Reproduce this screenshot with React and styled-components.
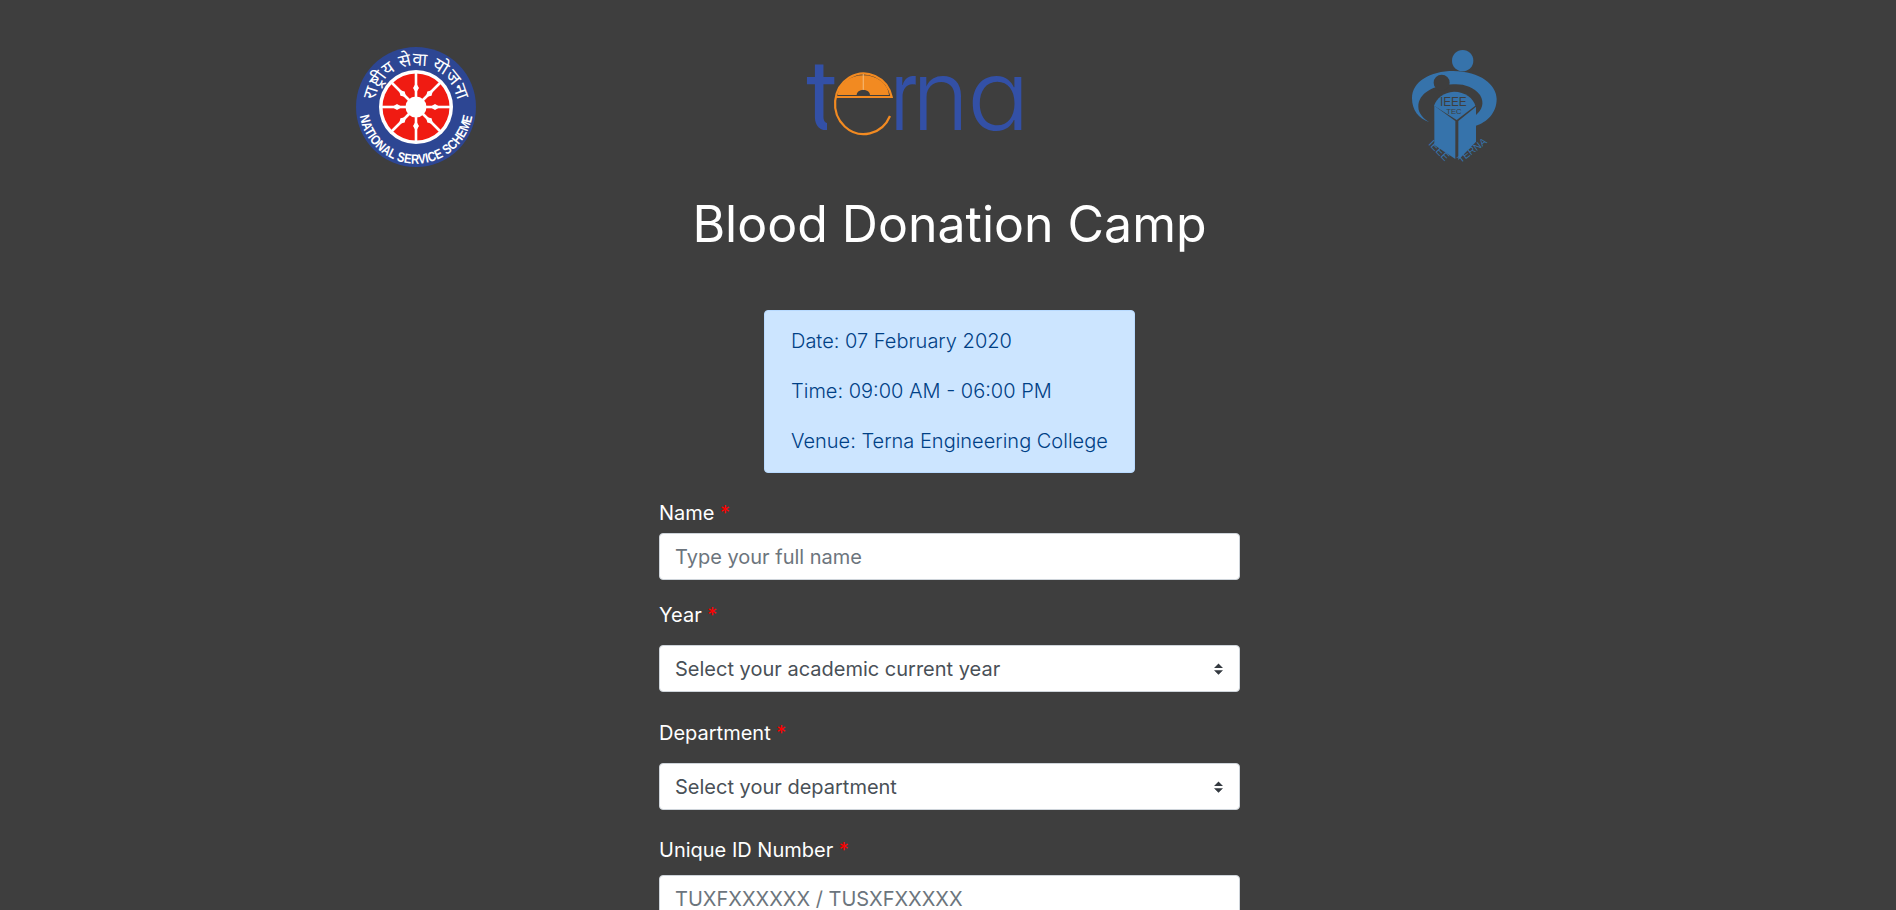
import React from "react"
import styled, { createGlobalStyle } from "styled-components"

const GlobalStyle = createGlobalStyle`
    html, body {
        margin: 0;
        height: 100%;
        overflow: hidden;
    }
    body {
        background: #3e3e3e;
        font-family: Inter, "Noto Sans", sans-serif;
        color: #fff;
    }
`

const Page = styled.div`
    display: flex;
    flex-direction: column;
    align-items: center;
    box-sizing: border-box;
    height: 910px;
    padding-left: 3px;
    overflow: hidden;
`

const LogoRow = styled.div`
    align-self: stretch;
    display: flex;
    align-items: flex-start;
    height: 189px;
    flex: none;
`

const LogoSvg = styled.svg`
    display: block;
    flex: none;
    overflow: visible;
    margin-left: ${props => props.$left}px;
    margin-top: ${props => props.$top}px;
`

const Title = styled.h1`
    margin: 0;
    font-size: 50px;
    line-height: 70px;
    font-weight: 400;
    text-align: center;
`

const Alert = styled.div`
    margin-top: 51px;
    box-sizing: border-box;
    width: 371px;
    height: 163px;
    padding: 15px 26px;
    display: flex;
    flex-direction: column;
    gap: 20px;
    flex: none;
    background: #cce5ff;
    border: 1px solid #b8daff;
    border-radius: 4px;
    color: #004085;
    font-size: 20px;
    font-weight: 300;
    line-height: 30px;
    white-space: nowrap;
`

const Form = styled.form`
    width: 581px;
    margin-top: 25px;
    flex: none;
`

const Group = styled.div`
    margin-top: ${props => props.$top}px;
`

const Label = styled.label`
    display: block;
    font-size: 20px;
    line-height: 30px;
    margin-bottom: ${props => props.$gap}px;
`

const Star = styled.span`
    color: #f00;
`

const Input = styled.input`
    display: block;
    box-sizing: border-box;
    width: 100%;
    height: 47px;
    padding: 0 15px;
    background: #fff;
    border: 1px solid #ced4da;
    border-radius: 4px;
    color: #495057;
    font-family: inherit;
    font-size: 20px;
    &::placeholder {
        color: #6c757d;
        opacity: 1;
    }
`

const Select = styled.select`
    display: block;
    box-sizing: border-box;
    width: 100%;
    height: 47px;
    padding: 0 32px 0 15px;
    appearance: none;
    background: #fff url("data:image/svg+xml,%3csvg xmlns='http://www.w3.org/2000/svg' width='4' height='5' viewBox='0 0 4 5'%3e%3cpath fill='%23343a40' d='M2 0L0 2h4zm0 5L0 3h4z'/%3e%3c/svg%3e") no-repeat right 16px center / 9px 12px;
    border: 1px solid #ced4da;
    border-radius: 4px;
    color: #495057;
    font-family: inherit;
    font-size: 20px;
`

const NssLogo = () => (
    <LogoSvg $left={353} $top={47} width="120" height="120" viewBox="0 0 120 120">
        <defs>
            <path id="nssTop" d="M 20.5 73 A 41.6 41.6 0 1 1 99.5 73" />
            <path id="nssBottom" d="M 3.6 68 A 57 57 0 0 0 116.4 68" />
        </defs>
        <circle cx="60" cy="60" r="60" fill="#2d4693" />
        <circle cx="60" cy="60" r="37" fill="#fff" />
        <circle cx="60" cy="60" r="33.5" fill="#f01b12" />
        {[0, 45, 90, 135, 180, 225, 270, 315].map(a => (
            <g key={a} transform={`rotate(${a} 60 60)`}>
                <rect x="58.7" y="24" width="2.6" height="30" fill="#fff" />
                <path d="M60 36l3 5-3 5-3-5z" fill="#fff" />
            </g>
        ))}
        <circle cx="60" cy="60" r="10.5" fill="#fff" />
        <text fill="#fff" fontSize="18" fontFamily="'Noto Sans Devanagari', 'Noto Sans', sans-serif">
            <textPath href="#nssTop" startOffset="50%" textAnchor="middle">राष्ट्रीय सेवा योजना</textPath>
        </text>
        <text fill="#fff" fontSize="13.5" fontWeight="700" fontFamily="'Liberation Sans', sans-serif">
            <textPath href="#nssBottom" startOffset="50%" textAnchor="middle" textLength="160" lengthAdjust="spacingAndGlyphs">NATIONAL SERVICE SCHEME</textPath>
        </text>
    </LogoSvg>
)

const TernaLogo = () => (
    <LogoSvg $left={330} $top={30} width="222" height="120" viewBox="0 -28 222 120">
        <defs>
            <clipPath id="ternaFoot">
                <rect x="0" y="-10" width="40" height="38" />
                <rect x="0" y="28" width="21" height="44" />
            </clipPath>
        </defs>
        <g clipPath="url(#ternaFoot)">
            <text x="0" y="72" fill="#3350a6" fontFamily="Inter, sans-serif" fontWeight="400" fontSize="97">t</text>
        </g>
        <path d="M 84 58 A 28.7 30.3 0 1 1 85.7 39 L 29 39" fill="none" stroke="#f28a21" strokeWidth="2.2" />
        <path d="M 31.7 37 A 25.7 21 0 0 1 83 37 L 64 37 A 6.7 5.3 0 0 0 50.6 37 Z" fill="#f28a21" />
        <rect x="56.8" y="16" width="0.8" height="16" fill="#f7c98f" />
        <g fill="#3350a6" fontFamily="Inter, sans-serif" fontWeight="350" fontSize="97">
            <text transform="translate(85 72) scale(0.72 1)" fontWeight="400">r</text>
            <text x="106" y="72">n</text>
            <text transform="translate(161 72) scale(1.08 1)">ɑ</text>
        </g>
    </LogoSvg>
)

const IeeeLogo = () => (
    <LogoSvg $left={362} $top={35} width="130" height="135" viewBox="0 0 390 405">
        <defs>
            <path id="ieeeLeft" d="M 114 328 L 190 405" />
            <path id="ieeeRight" d="M 212 385 L 310 310" />
        </defs>
        <circle cx="218" cy="77" r="32" fill="#3673ab" />
        <path d="M 66 190 C 66 140 120 108 190 108 C 270 108 320 150 320 192 C 320 235 290 262 258 272 L 258 240 C 275 225 285 205 270 180 C 250 155 220 146 190 148 C 130 150 85 175 85 215 C 85 235 100 250 118 262 C 85 250 66 225 66 190 Z" fill="#3673ab" />
        <path d="M 132 212 C 140 190 160 172 192 170 C 225 170 250 190 256 212 L 200 255 Z" fill="#3673ab" />
        <circle cx="155" cy="143" r="24" fill="#3e3e3e" />
        <path d="M 133 212 L 196 258 L 196 372 L 133 330 Z" fill="#3673ab" />
        <path d="M 205 258 L 258 215 L 258 320 L 205 375 Z" fill="#3673ab" />
        <text x="190" y="212" textAnchor="middle" fill="#3e3e3e" fontFamily="'Liberation Sans', sans-serif" fontSize="36" textLength="80" lengthAdjust="spacingAndGlyphs">IEEE</text>
        <text x="192" y="238" textAnchor="middle" fill="#3e3e3e" fontFamily="'Liberation Sans', sans-serif" fontSize="22" textLength="46" lengthAdjust="spacingAndGlyphs">TEC</text>
        <text fill="#3673ab" fontFamily="'Liberation Sans', sans-serif" fontSize="32">
            <textPath href="#ieeeLeft">IEEE</textPath>
        </text>
        <text fill="#3673ab" fontFamily="'Liberation Sans', sans-serif" fontSize="30">
            <textPath href="#ieeeRight">TERNA</textPath>
        </text>
    </LogoSvg>
)

const App = () => {
    return (
        <Page>
            <GlobalStyle />
            <LogoRow>
                <NssLogo />
                <TernaLogo />
                <IeeeLogo />
            </LogoRow>
            <Title>Blood Donation Camp</Title>
            <Alert>
                <div>Date: 07 February 2020</div>
                <div>Time: 09:00 AM - 06:00 PM</div>
                <div>Venue: Terna Engineering College</div>
            </Alert>
            <Form>
                <Group $top={0}>
                    <Label htmlFor="name" $gap={5}>Name <Star>*</Star></Label>
                    <Input id="name" placeholder="Type your full name" />
                </Group>
                <Group $top={20}>
                    <Label htmlFor="year" $gap={15}>Year <Star>*</Star></Label>
                    <Select id="year" defaultValue="">
                        <option value="">Select your academic current year</option>
                    </Select>
                </Group>
                <Group $top={26}>
                    <Label htmlFor="department" $gap={15}>Department <Star>*</Star></Label>
                    <Select id="department" defaultValue="">
                        <option value="">Select your department</option>
                    </Select>
                </Group>
                <Group $top={25}>
                    <Label htmlFor="uid" $gap={10}>Unique ID Number <Star>*</Star></Label>
                    <Input id="uid" placeholder="TUXFXXXXXX / TUSXFXXXXX" />
                </Group>
            </Form>
        </Page>
    )
}

export default App
